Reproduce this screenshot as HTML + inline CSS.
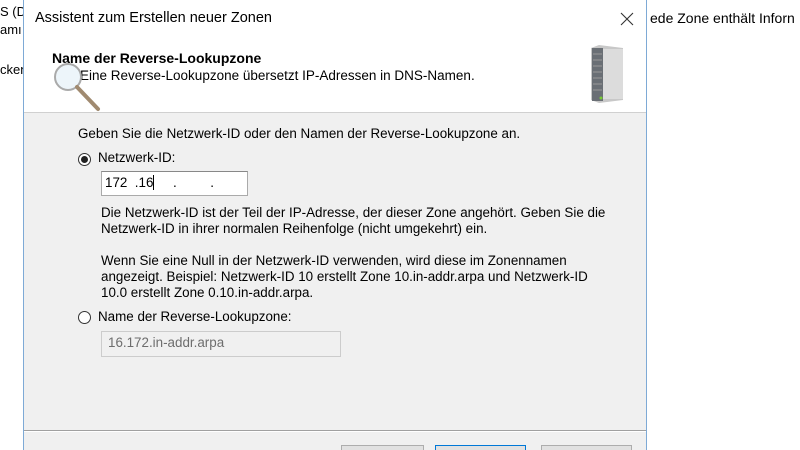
<!DOCTYPE html>
<html><head><meta charset="utf-8"><style>
html,body{margin:0;width:800px;height:450px;overflow:hidden}
body{background:#fff;font-family:"Liberation Sans",sans-serif;position:relative;color:#000}
.a{position:absolute;white-space:nowrap;font-size:13.4px}
.dlg{position:absolute;left:23px;top:0;width:622px;height:450px;border-left:1px solid #7eaad6;border-right:1px solid #7eaad6;background:#f0f0f0;overflow:hidden}
.hdr{position:absolute;left:0;top:0;width:622px;height:112px;background:#fff;border-bottom:1px solid #d0d0d0}
.radio{position:absolute;width:13px;height:13px;border:1px solid #333;border-radius:50%;background:#fff;box-sizing:border-box}
.btn{position:absolute;top:445px;height:5px;background:#e1e1e1;border:1px solid #adadad;border-bottom:none;box-sizing:border-box}
</style></head><body>
<div class="a" style="left:0;top:4px;font-size:13px">S (D</div>
<div class="a" style="left:0;top:22px;font-size:13px">amı</div>
<div class="a" style="left:0;top:62px;font-size:13px">cken</div>
<div class="a" style="left:650px;top:10px;font-size:14px">ede Zone enthält Inforn</div>
<div class="dlg">
 <div class="hdr">
  <div class="a" style="left:11px;top:10px;font-size:14.5px">Assistent zum Erstellen neuer Zonen</div>
  <svg style="position:absolute;left:596px;top:12px" width="14" height="14"><path d="M1 1L13 13M13 1L1 13" stroke="#333" stroke-width="1.1"/></svg>
  <div class="a" style="left:28px;top:50px;font-weight:bold;font-size:14px">Name der Reverse-Lookupzone</div>
  <div class="a" style="left:56px;top:68px;font-size:13.5px">Eine Reverse-Lookupzone übersetzt IP-Adressen in DNS-Namen.</div>
  <svg style="position:absolute;left:28px;top:60px" width="56" height="54"><circle cx="16" cy="17" r="13" fill="rgba(220,235,245,0.5)" stroke="#aaa" stroke-width="2"/><line x1="25" y1="27" x2="46" y2="49" stroke="#a08a70" stroke-width="4" stroke-linecap="round"/></svg>
  <svg style="position:absolute;left:563px;top:44px" width="40" height="60"><polygon points="4,4 12,1 36,4 36,56 12,59 4,56" fill="#c8c8c8"/><rect x="5" y="4" width="11" height="53" fill="#6a6f75"/><g stroke="#999" stroke-width="1"><line x1="6" y1="10" x2="15" y2="10"/><line x1="6" y1="16" x2="15" y2="16"/><line x1="6" y1="22" x2="15" y2="22"/><line x1="6" y1="28" x2="15" y2="28"/><line x1="6" y1="34" x2="15" y2="34"/><line x1="6" y1="40" x2="15" y2="40"/><line x1="6" y1="46" x2="15" y2="46"/></g><rect x="16" y="5" width="20" height="50" fill="#dcdcdc"/><circle cx="14" cy="54" r="1.5" fill="#7c3"/></svg>
 </div>
 <div class="a" style="left:54px;top:126px">Geben Sie die Netzwerk-ID oder den Namen der Reverse-Lookupzone an.</div>
 <div class="radio" style="left:54px;top:153px"><div style="position:absolute;left:2px;top:2px;width:7px;height:7px;border-radius:50%;background:#222"></div></div>
 <div class="a" style="left:74px;top:150px">Netzwerk-ID:</div>
 <div style="position:absolute;left:77px;top:171px;width:147px;height:25px;background:#fff;border:1px solid #aaa;border-top-color:#888;box-sizing:border-box"></div>
 <div class="a" style="left:81px;top:175px">172 &nbsp;.16<span style="border-left:1px solid #000"></span>&nbsp;&nbsp;&nbsp;&nbsp;&nbsp;.&nbsp;&nbsp;&nbsp;&nbsp;&nbsp;&nbsp;&nbsp;&nbsp;&nbsp;.</div>
 <div class="a" style="left:77px;top:205px;line-height:16px">Die Netzwerk-ID ist der Teil der IP-Adresse, der dieser Zone angehört. Geben Sie die<br>Netzwerk-ID in ihrer normalen Reihenfolge (nicht umgekehrt) ein.</div>
 <div class="a" style="left:77px;top:253px;line-height:16px">Wenn Sie eine Null in der Netzwerk-ID verwenden, wird diese im Zonennamen<br>angezeigt. Beispiel: Netzwerk-ID 10 erstellt Zone 10.in-addr.arpa und Netzwerk-ID<br>10.0 erstellt Zone 0.10.in-addr.arpa.</div>
 <div class="radio" style="left:54px;top:311px"></div>
 <div class="a" style="left:74px;top:309px">Name der Reverse-Lookupzone:</div>
 <div style="position:absolute;left:77px;top:331px;width:240px;height:26px;background:#f0f0f0;border:1px solid #ccc;box-sizing:border-box"></div>
 <div class="a" style="left:84px;top:335px;color:#6d6d6d">16.172.in-addr.arpa</div>
 <div style="position:absolute;left:0;top:430px;width:622px;height:1px;background:#a0a0a0"></div>
 <div style="position:absolute;left:0;top:431px;width:622px;height:1px;background:#fff"></div>
 <div class="btn" style="left:317px;width:83px"></div>
 <div class="btn" style="left:411px;width:91px;border-color:#0078d7"></div>
 <div class="btn" style="left:517px;width:91px"></div>
</div>
</body></html>
